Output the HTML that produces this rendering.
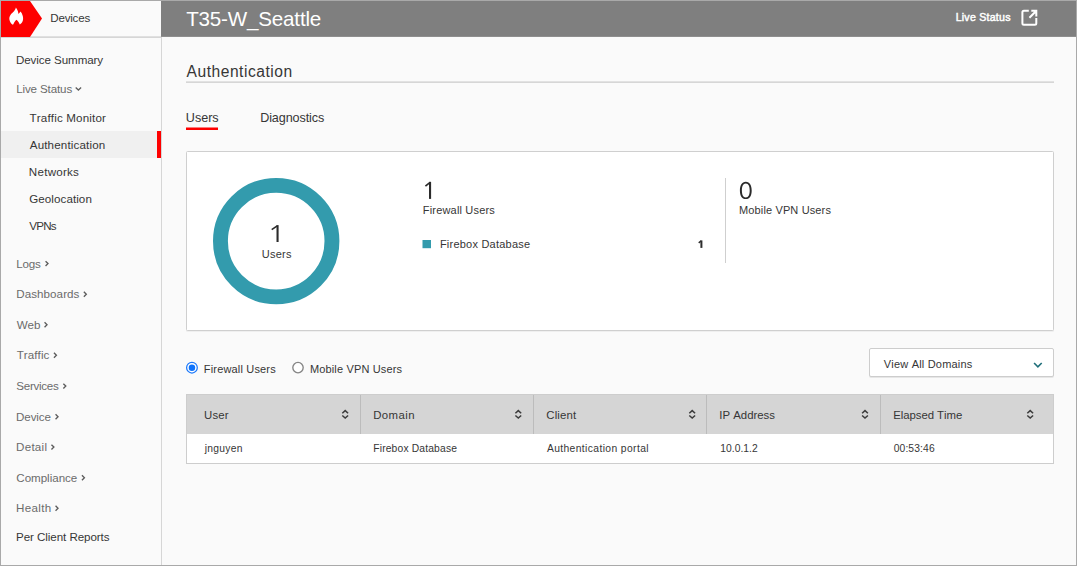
<!DOCTYPE html>
<html>
<head>
<meta charset="utf-8">
<style>
*{box-sizing:border-box;margin:0;padding:0}
html,body{width:1077px;height:566px;overflow:hidden;background:#fafafa}
body{font-family:"Liberation Sans",sans-serif;color:#333;position:relative;font-size:12px;font-kerning:none}
.abs{position:absolute}
.t{position:absolute;white-space:nowrap;line-height:1}
#frame{position:absolute;left:0;top:0;width:1077px;height:566px;border:1px solid #a9a9a9;z-index:50}
</style>
</head>
<body>
<!-- sidebar -->
<div class="abs" style="left:161px;top:37px;width:1px;height:528px;background:#d6d6d6"></div>
<div class="abs" style="left:1px;top:36px;width:160px;height:1px;background:#e0e0e0"></div>
<div class="abs" style="left:1px;top:37px;width:160px;height:1px;background:#d6d6d6"></div>
<svg class="abs" style="left:0px;top:0px" width="46" height="40" viewBox="0 0 46 40">
  <polygon points="1,1 30,1 42,18.6 30,37 1,37" fill="#fe0000"/>
  <path d="M15.9 7.4 C16.8 8.7 17.6 10.0 17.9 11.2 C18.2 12.2 18.3 13.0 18.5 13.9 C19.2 13.2 20.0 12.5 20.5 11.6 C21.5 12.8 22.2 14.0 22.6 15.4 C23.2 17.2 23.3 19.0 22.8 20.8 C22.2 22.6 21.2 23.8 19.8 24.5 C19.4 23.6 19.0 22.8 18.5 22.0 C18.0 21.0 17.2 20.2 16.4 19.7 C15.6 20.3 14.8 21.4 14.2 22.6 C13.8 23.4 13.4 24.2 13.0 24.8 C11.6 24.0 10.6 22.8 10.0 21.4 C9.2 19.6 9.1 17.8 9.8 16.2 C10.6 14.4 12.0 13.2 13.2 12.0 C14.4 10.8 15.4 9.4 15.9 7.4 Z" fill="#fff"/>
</svg>
<div class="abs" style="left:1px;top:131px;width:160px;height:27px;background:#f0f0f0"></div>
<div class="abs" style="left:157px;top:131px;width:4px;height:27px;background:#fe0000"></div>

<!-- header -->
<div class="abs" style="left:161px;top:1px;width:915px;height:35px;background:#7f7f7f"></div>
<div class="abs" style="left:161px;top:36px;width:915px;height:1px;background:#8e8e8e"></div>
<svg class="abs" style="left:1018px;top:6px" width="24" height="24" viewBox="0 0 24 24">
  <path d="M10.8 4.8 H5.9 A1.5 1.5 0 0 0 4.4 6.3 V17.3 A1.5 1.5 0 0 0 5.9 18.8 H16.8 A1.5 1.5 0 0 0 18.3 17.3 V12.1" fill="none" stroke="#fff" stroke-width="2"/>
  <path d="M13.3 4.8 H18.3 V10.4 M17.9 5.2 L11.4 11.7" fill="none" stroke="#fff" stroke-width="2"/>
</svg>

<!-- heading rule -->
<div class="abs" style="left:186px;top:81px;width:868px;height:1px;background:#e2e2e2"></div>
<div class="abs" style="left:186px;top:82px;width:868px;height:1px;background:#d6d6d6"></div>
<!-- tab underline -->
<div class="abs" style="left:186px;top:127px;width:32px;height:1px;background:#fc7c7c"></div>
<div class="abs" style="left:186px;top:128px;width:32px;height:2px;background:#fe0000"></div>

<!-- panel -->
<div class="abs" style="left:186px;top:151px;width:868px;height:180px;background:#fff;border:1px solid #cfcfcf;border-radius:1.5px;box-shadow:0 1px 0 #efefef"></div>
<svg class="abs" style="left:206px;top:171px" width="140" height="140" viewBox="0 0 140 140">
  <circle cx="70.2" cy="70.1" r="55.75" fill="none" stroke="#339bad" stroke-width="14.9"/>
</svg>
<svg class="abs" style="left:420px;top:237px" width="14" height="14" viewBox="420 237 14 14"><rect x="422.5" y="240" width="8.5" height="8.2" fill="#339bad"/></svg>
<div class="abs" style="left:725px;top:178px;width:1px;height:85px;background:#cfcfcf"></div>

<!-- big digits -->
<svg class="abs" style="left:265px;top:220px" width="20" height="26" viewBox="265 220 20 26"><path d="M276.5 225.1 H278.6 V242 H276.5 Z" fill="#2b2b2b"/><path d="M277.3 225.9 L271.7 229.6" stroke="#2b2b2b" stroke-width="1.7" fill="none"/></svg>
<svg class="abs" style="left:420px;top:177px" width="20" height="26" viewBox="420 177 20 26"><path d="M429 181.8 H431.1 V198.9 H429 Z" fill="#2b2b2b"/><path d="M429.8 182.6 L425.4 186.1" stroke="#2b2b2b" stroke-width="1.7" fill="none"/></svg>
<svg class="abs" style="left:735px;top:177px" width="22" height="26" viewBox="735 177 22 26"><path fill-rule="evenodd" fill="#2b2b2b" d="M745.8 181.8 C749.8 181.8 751.7 185.4 751.7 190.4 C751.7 195.4 749.8 199 745.8 199 C741.8 199 739.9 195.4 739.9 190.4 C739.9 185.4 741.8 181.8 745.8 181.8 Z M745.8 183.4 C743.0 183.4 741.9 186.4 741.9 190.4 C741.9 194.4 743.0 197.4 745.8 197.4 C748.6 197.4 749.7 194.4 749.7 190.4 C749.7 186.4 748.6 183.4 745.8 183.4 Z"/></svg>
<svg class="abs" style="left:694px;top:236px" width="14" height="16" viewBox="694 236 14 16"><path d="M700.4 240.4 H702.4 V247.9 H700.4 Z" fill="#2e2e2e"/><path d="M701.2 240.9 L698.7 242.8" stroke="#2e2e2e" stroke-width="1.5" fill="none"/></svg>
<!-- radios -->
<svg class="abs" style="left:185px;top:360px" width="14" height="14" viewBox="0 0 14 14"><circle cx="6.95" cy="7.65" r="5.35" fill="#fff" stroke="#1a78fb" stroke-width="1.25"/><circle cx="6.95" cy="7.65" r="3.25" fill="#0d72fb"/></svg>
<svg class="abs" style="left:291px;top:360px" width="14" height="14" viewBox="0 0 14 14"><circle cx="7" cy="7.6" r="5.2" fill="#fff" stroke="#858585" stroke-width="1.35"/></svg>

<!-- dropdown -->
<div class="abs" style="left:869px;top:348px;width:185px;height:29px;background:#fff;border:1px solid #cdcdcd;border-radius:2px;box-shadow:0 1px 0 #e6e6e6"></div>
<svg class="abs" style="left:1031px;top:359px" width="14" height="12" viewBox="0 0 14 12"><path d="M3.1 4.0 L6.9 7.8 L10.7 4.0" fill="none" stroke="#1f6f7a" stroke-width="1.6"/></svg>

<!-- table -->
<div class="abs" style="left:186px;top:394px;width:868px;height:70px;background:#fff;border:1px solid #cdcdcd"></div>
<div class="abs" style="left:187px;top:395px;width:866px;height:39px;background:#d5d5d5"></div>
<div class="abs" style="left:360px;top:395px;width:1px;height:39px;background:#bcbcbc"></div>
<div class="abs" style="left:533px;top:395px;width:1px;height:39px;background:#bcbcbc"></div>
<div class="abs" style="left:706px;top:395px;width:1px;height:39px;background:#bcbcbc"></div>
<div class="abs" style="left:880px;top:395px;width:1px;height:39px;background:#bcbcbc"></div>

<svg class="abs" style="left:0;top:0" width="1077" height="566" viewBox="0 0 1077 566">
<path d="M75.7 87.6 L78.4 90.1 L81.1 87.6" fill="none" stroke="#5e5e5e" stroke-width="1.3"/>
<path d="M45.55 261.15 L48.00 263.60 L45.55 266.05" fill="none" stroke="#5c5c5c" stroke-width="1.35"/>
<path d="M83.85 291.75 L86.30 294.20 L83.85 296.65" fill="none" stroke="#5c5c5c" stroke-width="1.35"/>
<path d="M44.55 322.25 L47.00 324.70 L44.55 327.15" fill="none" stroke="#5c5c5c" stroke-width="1.35"/>
<path d="M53.95 352.85 L56.40 355.30 L53.95 357.75" fill="none" stroke="#5c5c5c" stroke-width="1.35"/>
<path d="M63.35 383.65 L65.80 386.10 L63.35 388.55" fill="none" stroke="#5c5c5c" stroke-width="1.35"/>
<path d="M55.55 414.25 L58.00 416.70 L55.55 419.15" fill="none" stroke="#5c5c5c" stroke-width="1.35"/>
<path d="M51.45 444.65 L53.90 447.10 L51.45 449.55" fill="none" stroke="#5c5c5c" stroke-width="1.35"/>
<path d="M81.95 475.35 L84.40 477.80 L81.95 480.25" fill="none" stroke="#5c5c5c" stroke-width="1.35"/>
<path d="M55.55 505.85 L58.00 508.30 L55.55 510.75" fill="none" stroke="#5c5c5c" stroke-width="1.35"/>
<path d="M342.30 413.2 L345.20 410.6 L348.10 413.2 M342.30 415.5 L345.20 418.1 L348.10 415.5" fill="none" stroke="#3c3c3c" stroke-width="1.5"/>
<path d="M515.40 413.2 L518.30 410.6 L521.20 413.2 M515.40 415.5 L518.30 418.1 L521.20 415.5" fill="none" stroke="#3c3c3c" stroke-width="1.5"/>
<path d="M689.30 413.2 L692.20 410.6 L695.10 413.2 M689.30 415.5 L692.20 418.1 L695.10 415.5" fill="none" stroke="#3c3c3c" stroke-width="1.5"/>
<path d="M862.10 413.2 L865.00 410.6 L867.90 413.2 M862.10 415.5 L865.00 418.1 L867.90 415.5" fill="none" stroke="#3c3c3c" stroke-width="1.5"/>
<path d="M1027.30 413.2 L1030.20 410.6 L1033.10 413.2 M1027.30 415.5 L1030.20 418.1 L1033.10 415.5" fill="none" stroke="#3c3c3c" stroke-width="1.5"/>
</svg>

<div class="t" style="left:50.25px;top:12.00px;font-size:11.6px;color:#363636;letter-spacing:-0.214px;">Devices</div>
<div class="t" style="left:15.95px;top:54.00px;font-size:11.6px;color:#363636;letter-spacing:-0.080px;">Device Summary</div>
<div class="t" style="left:16.15px;top:83.00px;font-size:11.6px;color:#6b6b6b;letter-spacing:-0.132px;">Live Status</div>
<div class="t" style="left:29.54px;top:112.00px;font-size:11.6px;color:#363636;letter-spacing:0.159px;">Traffic Monitor</div>
<div class="t" style="left:29.78px;top:139.00px;font-size:11.6px;color:#363636;letter-spacing:0.150px;">Authentication</div>
<div class="t" style="left:28.85px;top:166.00px;font-size:11.6px;color:#363636;letter-spacing:0.247px;">Networks</div>
<div class="t" style="left:29.22px;top:193.00px;font-size:11.6px;color:#363636;letter-spacing:0.073px;">Geolocation</div>
<div class="t" style="left:29.35px;top:220.00px;font-size:11.6px;color:#363636;letter-spacing:-0.827px;">VPNs</div>
<div class="t" style="left:16.25px;top:258.00px;font-size:11.6px;color:#6b6b6b;letter-spacing:-0.194px;">Logs</div>
<div class="t" style="left:16.25px;top:288.00px;font-size:11.6px;color:#6b6b6b;letter-spacing:0.069px;">Dashboards</div>
<div class="t" style="left:16.65px;top:319.00px;font-size:11.6px;color:#6b6b6b;letter-spacing:-0.057px;">Web</div>
<div class="t" style="left:16.64px;top:349.00px;font-size:11.6px;color:#6b6b6b;letter-spacing:0.091px;">Traffic</div>
<div class="t" style="left:16.37px;top:380.00px;font-size:11.6px;color:#6b6b6b;letter-spacing:-0.305px;">Services</div>
<div class="t" style="left:16.05px;top:411.00px;font-size:11.6px;color:#6b6b6b;letter-spacing:-0.118px;">Device</div>
<div class="t" style="left:16.05px;top:441.00px;font-size:11.6px;color:#6b6b6b;letter-spacing:0.254px;">Detail</div>
<div class="t" style="left:16.31px;top:472.00px;font-size:11.6px;color:#6b6b6b;letter-spacing:-0.027px;">Compliance</div>
<div class="t" style="left:16.05px;top:502.00px;font-size:11.6px;color:#6b6b6b;letter-spacing:0.315px;">Health</div>
<div class="t" style="left:16.05px;top:531.00px;font-size:11.6px;color:#363636;letter-spacing:-0.071px;">Per Client Reports</div>
<div class="t" style="left:186.14px;top:9.00px;font-size:20.6px;color:#ffffff;letter-spacing:-0.184px;">T35-W_Seattle</div>
<div class="t" style="left:955.63px;top:12.00px;font-size:10.6px;color:#ffffff;letter-spacing:0.241px;-webkit-text-stroke:0.45px #fff;">Live Status</div>
<div class="t" style="left:186.57px;top:64.00px;font-size:15.6px;color:#363636;letter-spacing:0.513px;">Authentication</div>
<div class="t" style="left:185.83px;top:112.00px;font-size:12.6px;color:#363636;letter-spacing:-0.019px;">Users</div>
<div class="t" style="left:260.17px;top:112.00px;font-size:12.6px;color:#363636;letter-spacing:-0.104px;">Diagnostics</div>
<div class="t" style="left:261.75px;top:249.00px;font-size:11px;color:#363636;letter-spacing:0.255px;">Users</div>
<div class="t" style="left:422.80px;top:205.00px;font-size:11px;color:#363636;letter-spacing:0.179px;">Firewall Users</div>
<div class="t" style="left:439.90px;top:239.00px;font-size:11px;color:#363636;letter-spacing:0.224px;">Firebox Database</div>
<div class="t" style="left:739.00px;top:205.00px;font-size:11px;color:#363636;letter-spacing:0.136px;">Mobile VPN Users</div>
<div class="t" style="left:203.80px;top:364.00px;font-size:11px;color:#363636;letter-spacing:0.171px;">Firewall Users</div>
<div class="t" style="left:309.90px;top:364.00px;font-size:11px;color:#363636;letter-spacing:0.156px;">Mobile VPN Users</div>
<div class="t" style="left:883.75px;top:359.00px;font-size:11px;color:#363636;letter-spacing:0.198px;">View All Domains</div>
<div class="t" style="left:204.02px;top:410.00px;font-size:11.4px;color:#363636;letter-spacing:0.167px;">User</div>
<div class="t" style="left:373.16px;top:410.00px;font-size:11.4px;color:#363636;letter-spacing:0.439px;">Domain</div>
<div class="t" style="left:546.32px;top:410.00px;font-size:11.4px;color:#363636;letter-spacing:0.123px;">Client</div>
<div class="t" style="left:719.35px;top:410.00px;font-size:11.4px;color:#363636;letter-spacing:-0.011px;">IP Address</div>
<div class="t" style="left:893.16px;top:410.00px;font-size:11.4px;color:#363636;letter-spacing:-0.050px;">Elapsed Time</div>
<div class="t" style="left:204.75px;top:444.00px;font-size:10.3px;color:#363636;letter-spacing:0.256px;">jnguyen</div>
<div class="t" style="left:373.26px;top:444.00px;font-size:10.3px;color:#363636;letter-spacing:0.160px;">Firebox Database</div>
<div class="t" style="left:546.88px;top:444.00px;font-size:10.3px;color:#363636;letter-spacing:0.390px;">Authentication portal</div>
<div class="t" style="left:720.32px;top:444.00px;font-size:10.3px;color:#363636;letter-spacing:0.025px;">10.0.1.2</div>
<div class="t" style="left:893.70px;top:444.00px;font-size:10.3px;color:#363636;letter-spacing:0.123px;">00:53:46</div>

<div id="frame"></div>
</body>
</html>
